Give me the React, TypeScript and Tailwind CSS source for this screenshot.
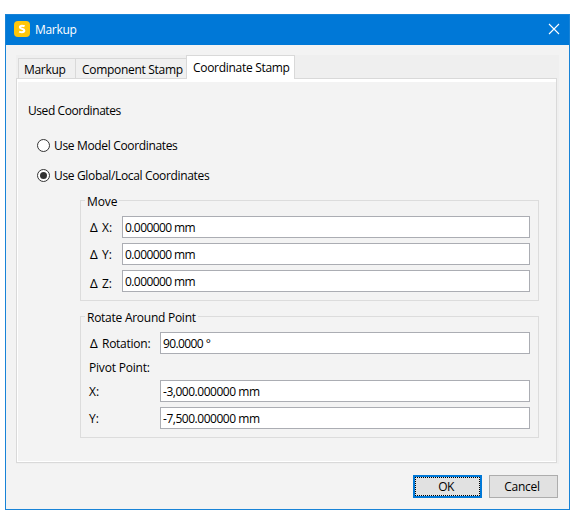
import React, { useState } from 'react';

const moveFields = [
  { label: 'X:', value: '0.000000 mm', labelClass: 'pt-[3px]' },
  { label: 'Y:', value: '0.000000 mm', labelClass: 'pt-[3px]' },
  { label: 'Z:', value: '0.000000 mm', labelClass: 'pt-[5px]' },
];

const inputClass =
  'block h-[22px] min-w-0 flex-1 border border-[#abadb3] bg-white pl-[2px] pt-px text-xs outline-none';

function GroupBox({ title, className, titleClass, children }: { title: string; className: string; titleClass: string; children: React.ReactNode }) {
  return (
    <section className={`relative ml-[62px] w-[459px] border border-[#dcdcdc] ${className}`}>
      <h2 className={`absolute left-[4px] bg-[#f3f3f3] px-[2px] leading-4 ${titleClass}`}>{title}</h2>
      {children}
    </section>
  );
}

function Delta() {
  return <span className="mr-[4px] inline-block w-[8px] font-['Noto_Sans']">Δ</span>;
}

function Radio({ checked, onClick, children }: { checked: boolean; onClick: () => void; children: React.ReactNode }) {
  return (
    <button role="radio" aria-checked={checked} onClick={onClick} className="flex h-4 items-center gap-1">
      <svg width="13" height="13" viewBox="0 0 13 13" className="mb-px">
        <circle cx="6.5" cy="6.5" r="6" fill="#fff" stroke="#333" />
        {checked && <circle cx="6.5" cy="6.5" r="3.5" fill="#333" />}
      </svg>
      {children}
    </button>
  );
}

export default function App() {
  const [mode, setMode] = useState('global');

  return (
    <div className="h-[517px] w-[581px] overflow-hidden bg-white pl-[5px] pt-[14px] font-['Open_Sans','Noto_Sans',sans-serif] text-xs text-black">
      <div className="flex h-[496px] w-[565px] flex-col border border-[#1883d7] bg-[#f3f3f3]">
        {/* Title bar */}
        <header className="flex h-[30px] shrink-0 items-center bg-[#0078d7] pl-[8px] pr-[9px] text-white">
          <svg width="16" height="16" viewBox="0 0 16 16" className="mb-[2px]">
            <rect width="16" height="16" rx="4" fill="#ffc60a" />
            <path d="M10.6 5.3C9.8 4.9 8.9 4.7 8 4.7C6.7 4.7 5.9 5.3 5.9 6.2C5.9 8.3 10.3 7.2 10.3 9.6C10.3 10.7 9.3 11.3 7.9 11.3C6.9 11.3 6 11 5.2 10.6" fill="none" stroke="#fff" strokeWidth="2.1" />
          </svg>
          <h1 className="ml-[5px] tracking-[-0.3px]">Markup</h1>
          <button className="ml-auto" aria-label="Close">
            <svg width="12" height="12" viewBox="0 0 12 12" className="mb-[2px] block">
              <path d="M1 1 11 11M11 1 1 11" stroke="#fff" strokeWidth="1.1" />
            </svg>
          </button>
        </header>

        {/* Tabs */}
        <div className="ml-[10px] mt-[10px] h-[409px] w-[543px] shrink-0 bg-[#efefef]">
          <div className="relative z-10 flex h-[24px] items-end pl-[2px] tracking-[-0.3px]">
            <button className="mb-px h-[20px] w-[57px] border-l border-t border-[#d9d9d9] bg-[#f0f0f0] pl-[5px] pt-[2px] text-left leading-4">Markup</button>
            <button className="mb-px h-[20px] w-[111px] whitespace-nowrap border-l border-t border-[#d9d9d9] bg-[#f0f0f0] pl-[6px] pt-[2px] text-left leading-4">Component Stamp</button>
            <button className="flex h-[24px] w-[109px] items-start whitespace-nowrap border-x border-t border-[#d9d9d9] bg-white pl-[6px] pt-[4px] leading-4">Coordinate Stamp</button>
          </div>
          <main className="mt-[-1px] h-[385px] w-[541px] border border-[#d9d9d9] bg-white pb-px pl-px pt-[3px]">
            <div className="h-[379px] bg-[#f3f3f3]">
              <p className="pl-[10px] pt-[21px] leading-4 tracking-[-0.43px]">Used Coordinates</p>
              <div role="radiogroup" className="flex flex-col gap-[14px] pl-[19px] pt-[19px] tracking-[-0.34px]">
                <Radio checked={mode === 'model'} onClick={() => setMode('model')}>Use Model Coordinates</Radio>
                <Radio checked={mode === 'global'} onClick={() => setMode('global')}>Use Global/Local Coordinates</Radio>
              </div>

              <GroupBox title="Move" className="mt-[16px] h-[101px] pl-[9px] pr-[8px] pt-[15px]" titleClass="top-[-7px] tracking-[-0.1px]">
                <div className="flex flex-col gap-[5px]">
                  {moveFields.map((field) => (
                    <label key={field.label} className="flex h-[22px]">
                      <span className={`w-[32px] whitespace-nowrap leading-[18px] ${field.labelClass}`}><Delta />{field.label}</span>
                      <input className={`${inputClass} tracking-[-0.58px]`} defaultValue={field.value} />
                    </label>
                  ))}
                </div>
              </GroupBox>

              <GroupBox title="Rotate Around Point" className="mt-[15px] h-[122px] pl-[8px] pr-[8px] pt-[15px]" titleClass="top-[-7px] tracking-[-0.26px]">
                <label className="flex h-[22px] items-center">
                  <span className="w-[71px] whitespace-nowrap pl-px pt-px tracking-[-0.26px]"><Delta />Rotation:</span>
                  <input className={`${inputClass} tracking-[-0.6px]`} defaultValue="90.0000 °" />
                </label>
                <p className="mt-[5px] h-[21px] pt-px leading-4 tracking-[-0.2px]">Pivot Point:</p>
                <label className="flex h-[22px] items-center">
                  <span className="w-[71px] pt-px">X:</span>
                  <input className={`${inputClass} tracking-[-0.47px]`} defaultValue="-3,000.000000 mm" />
                </label>
                <label className="mt-[5px] flex h-[22px] items-center">
                  <span className="w-[71px] pt-px">Y:</span>
                  <input className={`${inputClass} tracking-[-0.47px]`} defaultValue="-7,500.000000 mm" />
                </label>
              </GroupBox>
            </div>
          </main>
        </div>

        {/* Dialog buttons */}
        <footer className="mt-[11px] flex justify-end gap-[7px] pr-[11px]">
          <button className="h-[23px] w-[69px] border-2 border-[#0078d7] bg-[#e1e1e1] tracking-[-0.5px]">
            <span className="flex h-full items-center justify-center border border-dotted border-black pr-[3px] pt-px">OK</span>
          </button>
          <button className="h-[23px] w-[69px] border border-[#adadad] bg-[#e1e1e1] pr-[3px] pt-px tracking-[-0.3px]">Cancel</button>
        </footer>
      </div>
    </div>
  );
}
